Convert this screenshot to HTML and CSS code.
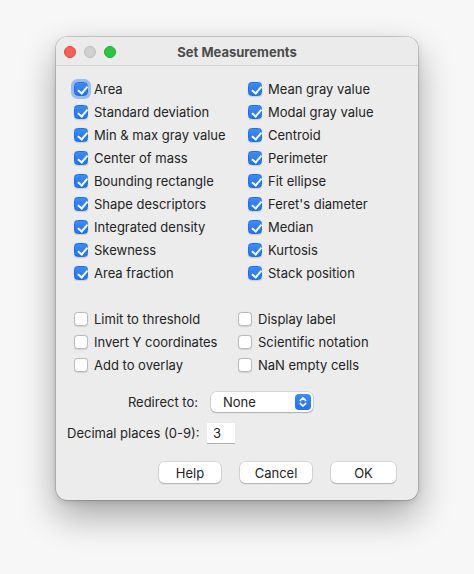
FILE: index.html
```html
<!DOCTYPE html>
<html>
<head>
<meta charset="utf-8">
<link rel="stylesheet" href="styles.css">
</head>
<body>
<div class="window">
  <div class="titlebar">
    <div class="lights">
      <span class="light red"></span>
      <span class="light gray"></span>
      <span class="light green"></span>
    </div>
    <div class="title">Set Measurements</div>
  </div>
  <div class="content">
    <div class="grid grid-main">
      <label class="item"><span class="cb on focus"></span>Area</label>
      <label class="item"><span class="cb on"></span>Mean gray value</label>
      <label class="item"><span class="cb on"></span>Standard deviation</label>
      <label class="item"><span class="cb on"></span>Modal gray value</label>
      <label class="item"><span class="cb on"></span>Min &amp; max gray value</label>
      <label class="item"><span class="cb on"></span>Centroid</label>
      <label class="item"><span class="cb on"></span>Center of mass</label>
      <label class="item"><span class="cb on"></span>Perimeter</label>
      <label class="item"><span class="cb on"></span>Bounding rectangle</label>
      <label class="item"><span class="cb on"></span>Fit ellipse</label>
      <label class="item"><span class="cb on"></span>Shape descriptors</label>
      <label class="item"><span class="cb on"></span>Feret's diameter</label>
      <label class="item"><span class="cb on"></span>Integrated density</label>
      <label class="item"><span class="cb on"></span>Median</label>
      <label class="item"><span class="cb on"></span>Skewness</label>
      <label class="item"><span class="cb on"></span>Kurtosis</label>
      <label class="item"><span class="cb on"></span>Area fraction</label>
      <label class="item"><span class="cb on"></span>Stack position</label>
    </div>
    <div class="grid grid-opts">
      <label class="item"><span class="cb"></span>Limit to threshold</label>
      <label class="item"><span class="cb"></span>Display label</label>
      <label class="item"><span class="cb"></span>Invert Y coordinates</label>
      <label class="item"><span class="cb"></span>Scientific notation</label>
      <label class="item"><span class="cb"></span>Add to overlay</label>
      <label class="item"><span class="cb"></span>NaN empty cells</label>
    </div>
    <div class="form">
      <div class="row redirect">
        <span class="flabel">Redirect to:</span>
        <div class="select">
          <span class="select-text">None</span>
          <span class="stepper">
            <svg width="10" height="12" viewBox="0 0 10 12"><path d="M2.2 4.6 L5 1.9 L7.8 4.6 M2.2 7.4 L5 10.1 L7.8 7.4" fill="none" stroke="#fff" stroke-width="1.5" stroke-linecap="round" stroke-linejoin="round"/></svg>
          </span>
        </div>
      </div>
      <div class="row decimal">
        <span class="flabel">Decimal places (0-9):</span>
        <div class="input">3</div>
      </div>
    </div>
    <div class="buttons">
      <button class="btn help">Help</button>
      <button class="btn cancel">Cancel</button>
      <button class="btn ok">OK</button>
    </div>
  </div>
</div>
</body>
</html>
```
FILE: styles.css
```css
html, body {
  margin: 0;
  padding: 0;
}
body {
  background: #f7f7f7;
  font-family: Inter, "Liberation Sans", Arial, sans-serif;
  font-size: 13px;
  color: #242424;
  width: 474px;
  height: 574px;
  overflow: hidden;
  padding-top: 37px;
  box-sizing: border-box;
}
.window {
  margin-left: 56px;
  width: 362px;
  height: 463px;
  background: #ececec;
  border-radius: 11px;
  box-shadow: 0 0 0 0.5px rgba(0,0,0,0.28), 0 16px 36px rgba(0,0,0,0.33), 0 2px 6px rgba(0,0,0,0.12);
  overflow: hidden;
  box-sizing: border-box;
}
.titlebar {
  height: 29px;
  border-bottom: 1px solid #d3d3d3;
  display: flex;
  align-items: center;
  position: relative;
  box-sizing: border-box;
  background: #ebebeb;
  padding-top: 1px;
}
.lights {
  display: flex;
  gap: 8px;
  padding-left: 8px;
  position: absolute;
  left: 0;
  top: 9px;
}
.light {
  width: 12px;
  height: 12px;
  border-radius: 50%;
  box-sizing: border-box;
}
.red { background: #fe5f57; border: 0.5px solid #e2463f; }
.gray { background: #d0d0d0; border: 0.5px solid #bcbcbc; }
.green { background: #29c740; border: 0.5px solid #1dad2b; }
.title {
  flex: 1;
  text-align: center;
  font-weight: 700;
  color: #4c4c4c;
  font-size: 13px;
}
.content {
  padding-top: 11.5px;
  padding-left: 18px;
}
.grid {
  display: grid;
  grid-auto-rows: 23px;
  align-items: center;
}
.grid-main {
  grid-template-columns: 174px 1fr;
}
.grid-opts {
  grid-template-columns: 164px 1fr;
  margin-top: 23px;
}
.item {
  display: flex;
  align-items: center;
  gap: 6px;
  white-space: nowrap;
}
.cb {
  width: 14px;
  height: 14px;
  border-radius: 3.5px;
  box-sizing: border-box;
  background: #fff;
  border: 0.5px solid #b9b9b9;
  box-shadow: 0 0.5px 1px rgba(0,0,0,0.12);
  flex: none;
  position: relative;
}
.cb.on {
  background: linear-gradient(#3b8cfd, #1f73f0);
  border: 0.5px solid #1d6ee8;
}
.cb.on::after {
  content: "";
  position: absolute;
  left: 4.5px;
  top: 1.3px;
  width: 3.5px;
  height: 7.5px;
  border: solid #fff;
  border-width: 0 2px 2px 0;
  transform: rotate(40deg);
}
.cb.focus {
  box-shadow: 0 0 0 3px rgba(90,150,240,0.55);
}
.form {
  margin-top: 15.5px;
  display: flex;
  flex-direction: column;
  gap: 10.5px;
}
.row {
  display: flex;
  align-items: center;
}
.flabel {
  white-space: nowrap;
  flex: none;
}
.redirect .flabel { width: 131px; margin-left: -7px; text-align: right; }
.decimal .flabel { width: 134px; margin-left: -7px; text-align: left; }
.select {
  margin-left: 13px;
  width: 102px;
  height: 20px;
  background: #fff;
  border-radius: 5px;
  box-shadow: 0 0 0 0.5px rgba(0,0,0,0.18), 0 1px 1.5px rgba(0,0,0,0.2);
  display: flex;
  align-items: center;
  justify-content: space-between;
  box-sizing: border-box;
  padding: 0 2px 0 12px;
}
.stepper {
  width: 16px;
  height: 16px;
  border-radius: 4px;
  background: linear-gradient(#3a8bfc, #1f72ef);
  display: flex;
  align-items: center;
  justify-content: center;
}
.input {
  margin-left: 6px;
  width: 28px;
  height: 21px;
  background: #fff;
  border-bottom: 1px solid #b0b0b0;
  box-sizing: border-box;
  padding-left: 6px;
  line-height: 21px;
}
.buttons {
  margin-top: 18.5px;
  display: flex;
  justify-content: flex-end;
  gap: 19px;
  padding-right: 22px;
}
.btn {
  height: 21px;
  background: #fff;
  border: none;
  border-radius: 5px;
  box-shadow: 0 0 0 0.5px rgba(0,0,0,0.16), 0 1px 1.5px rgba(0,0,0,0.2);
  font-family: Inter, "Liberation Sans", Arial, sans-serif;
  font-size: 13px;
  color: #242424;
  padding: 0;
}
.help { width: 62px; }
.cancel { width: 72px; }
.ok { width: 65px; }
```
